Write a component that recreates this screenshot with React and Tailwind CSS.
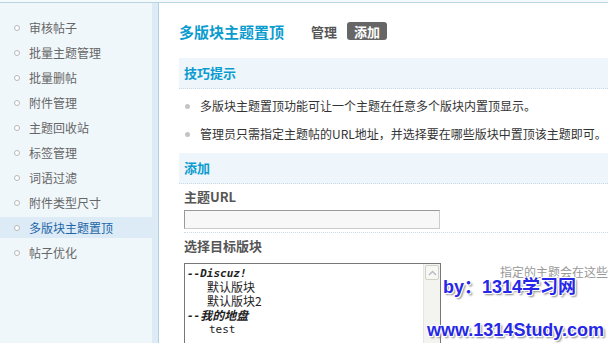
import React from "react";

const items = ["审核帖子","批量主题管理","批量删帖","附件管理","主题回收站","标签管理","词语过滤","附件类型尺寸","多版块主题置顶","帖子优化"];

const mono = { fontFamily: '"DejaVu Sans Mono", monospace', fontSize: "11px" };

export default function App() {
  return (
    <div className="w-[608px] h-[343px] overflow-hidden relative bg-white text-[12px] text-[#333]" style={{fontFamily: '"Noto Sans CJK SC", "Liberation Sans", sans-serif'}}>
      <div className="h-[2px] bg-[#f4f9fc]" />
      <div className="h-[1px] bg-[#b9d4e2]" />
      <div className="flex h-[340px]">
        <div className="w-[152px] shrink-0 bg-[#f0f7fb] pt-[12px]">
          {items.map((t) => {
            const active = t === "多版块主题置顶";
            return (
              <div key={t} className="h-[25px] py-[2px]">
                <div className={"h-[21px] flex items-center pl-[14px] " + (active ? "bg-[#dcebf6] text-[#2366a8]" : "text-[#666]")}>
                  <span className="w-[6px] h-[6px] rounded-full border border-[#b8b8b8] bg-white mr-[9px]" />
                  <span className="text-[12px] leading-none">{t}</span>
                </div>
              </div>
            );
          })}
        </div>
        <div className="w-[6px] shrink-0 bg-[#dcebf6]" />
        <div className="w-[1px] shrink-0 bg-[#b2d0de]" />
        <div className="flex-1 pl-[20px] min-w-0">
          <div className="flex items-center h-[22px] mt-[17px]">
            <span className="text-[15px] font-bold text-[#0b9ccf] leading-none">多版块主题置顶</span>
            <span className="ml-[27px] text-[13px] font-bold text-[#555] leading-none">管理</span>
            <span className="ml-[10px] px-[7px] h-[18px] flex items-center rounded-[3px] bg-[#666] text-white text-[13px] font-bold leading-none">添加</span>
          </div>
          <div className="mt-[16px] h-[31px] bg-[#eef5fb] border-b border-dotted border-[#c9d9e6] flex items-center pl-[5px] text-[13px] font-bold text-[#0b9ccf]">技巧提示</div>
          <div className="pl-[6px] pt-[3px]">
            <div className="h-[28px] flex items-center"><span className="w-[5px] h-[5px] rounded-full bg-[#c4c4c4] mr-[10px]" /><span>多版块主题置顶功能可让一个主题在任意多个版块内置顶显示。</span></div>
            <div className="h-[28px] flex items-center whitespace-nowrap"><span className="w-[5px] h-[5px] rounded-full bg-[#c4c4c4] mr-[10px]" /><span>管理员只需指定主题帖的URL地址，并选择要在哪些版块中置顶该主题即可。</span></div>
          </div>
          <div className="mt-[5px] h-[31px] bg-[#eef5fb] border-b border-dotted border-[#c9d9e6] flex items-center pl-[5px] text-[13px] font-bold text-[#0b9ccf]">添加</div>
          <div className="pl-[5px]">
            <div className="h-[26px] flex items-center text-[13px] font-bold text-[#555]">主题URL</div>
            <div className="w-[256px] h-[19px] border border-[#999] border-r-[#ccc] border-b-[#ccc] bg-[#f7f7f7]" />
            <div className="mt-[3px] border-t border-dotted border-[#c9d9e6]" />
            <div className="h-[25px] flex items-center text-[13px] font-bold text-[#555]">选择目标版块</div>
            <div className="flex items-start mt-[5px]">
              <div className="w-[257px] h-[100px] border border-[#777] bg-white flex shrink-0">
                <div className="flex-1 pl-[2px] pt-[2px] text-[12px] text-[#222]">
                  <div className="h-[14px] flex items-center font-bold italic leading-none" style={mono}>--Discuz!</div>
                  <div className="h-[14px] flex items-center pl-[20px] leading-none">默认版块</div>
                  <div className="h-[14px] flex items-center pl-[20px] leading-none">默认版块2</div>
                  <div className="h-[14px] flex items-center font-bold italic leading-none"><span style={mono}>--</span><span>我的地盘</span></div>
                  <div className="h-[15px] flex items-center pl-[22px] leading-none" style={mono}>test</div>
                </div>
                <div className="w-[17px] bg-[#f3f3ef] border-l border-[#e6e6e0] pt-[1px] px-[1px]">
                  <div className="h-[15px] border border-[#d0d0c8] rounded-[2px] bg-[#f7f7f4] flex items-center justify-center">
                    <svg width="9" height="6" viewBox="0 0 9 6"><path d="M1 5 L4.5 1.5 L8 5" fill="none" stroke="#b8bcc4" strokeWidth="1.5" /></svg>
                  </div>
                </div>
              </div>
              <div className="ml-[59px] mt-[1px] text-[#999] whitespace-nowrap leading-[16px]">指定的主题会在这些版块中置顶</div>
            </div>
          </div>
        </div>
      </div>
      <div className="absolute left-[443px] top-[278px] text-[18px] font-bold text-[#2727e8] leading-none whitespace-nowrap" style={{fontFamily: '"Liberation Sans", "Noto Sans CJK SC", sans-serif', textShadow: '1px 1px 0 #fff, -1px -1px 0 #fff, 1px -1px 0 #fff, -1px 1px 0 #fff, 2px 2px 2px #888'}}>by：1314学习网</div>
      <div className="absolute left-[427px] top-[321px] text-[18px] font-bold text-[#2727e8] leading-none whitespace-nowrap" style={{fontFamily: '"Liberation Sans", sans-serif', textShadow: '1px 1px 0 #fff, -1px -1px 0 #fff, 1px -1px 0 #fff, -1px 1px 0 #fff, 2px 2px 2px #888'}}>www.1314Study.com</div>
    </div>
  );
}
